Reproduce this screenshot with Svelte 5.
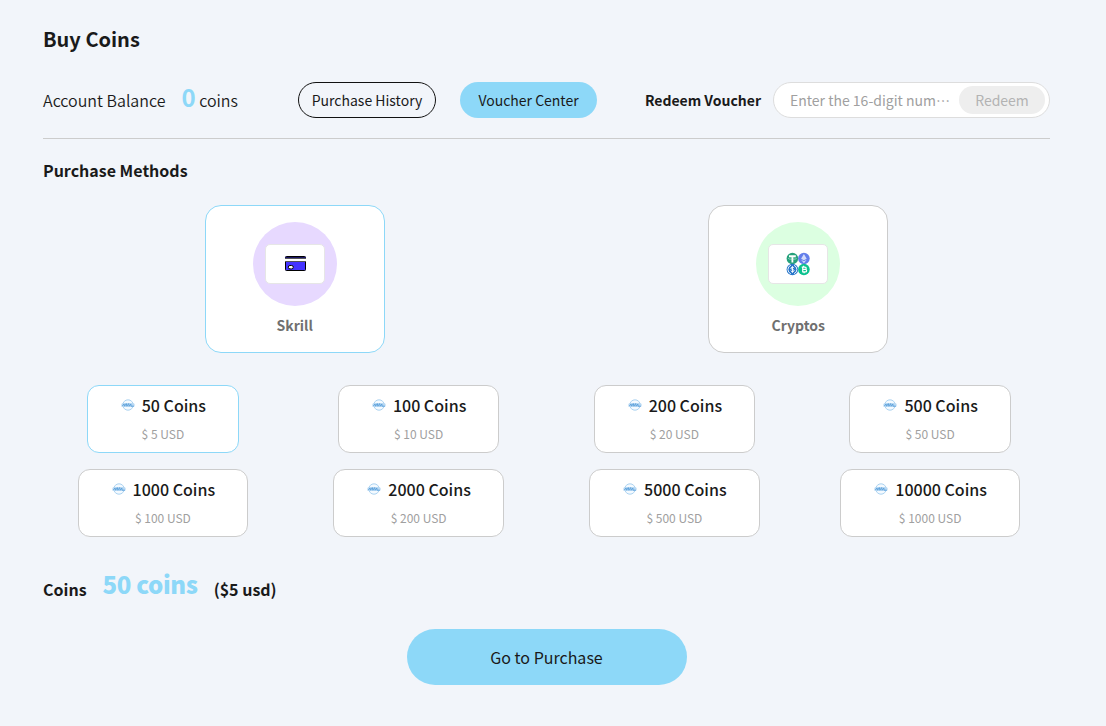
<script lang="ts">
  interface Pack {
    coins: number;
    usd: number;
  }

  const methods = [
    { id: "skrill", name: "Skrill", tint: "#e7d9ff" },
    { id: "cryptos", name: "Cryptos", tint: "#dcffe1" },
  ];

  const packs: Pack[] = [
    { coins: 50, usd: 5 },
    { coins: 100, usd: 10 },
    { coins: 200, usd: 20 },
    { coins: 500, usd: 50 },
    { coins: 1000, usd: 100 },
    { coins: 2000, usd: 200 },
    { coins: 5000, usd: 500 },
    { coins: 10000, usd: 1000 },
  ];

  let method = $state("skrill");
  let selected = $state(0);
  let voucher = $state("");

  const pack = $derived(packs[selected]);
</script>

<main>
  <h1>Buy Coins</h1>

  <div class="account">
    <div class="balance">
      <span>Account Balance</span>
      <span><b>0</b> coins</span>
    </div>
    <button class="pill history">Purchase History</button>
    <button class="pill center">Voucher Center</button>
    <label for="voucher">Redeem Voucher</label>
    <div class="redeem">
      <input id="voucher" placeholder="Enter the 16-digit number" maxlength="16" bind:value={voucher} />
      <button disabled={voucher.length < 16}>Redeem</button>
    </div>
  </div>

  <h2>Purchase Methods</h2>

  <div class="methods">
    {#each methods as m}
      <button class="method" class:active={method === m.id} onclick={() => (method = m.id)}>
        <span class="disc" style="background: {m.tint}">
          <span class="plate">
            {#if m.id === "skrill"}
              <svg width="22" height="16" viewBox="0 0 22 16">
                <rect x="1.5" y="0.5" width="20" height="14" rx="0.8" fill="#4433ff" stroke="#000" />
                <path d="M1 1.5h21" stroke="#1c1766" />
                <rect x="1" y="2" width="21" height="4" fill="#fff" />
                <path d="M1 2.5h21M1 5.5h21" stroke="#555" />
                <rect x="4.3" y="9.5" width="5" height="3.4" rx="1.7" fill="#fff" stroke="#000" />
              </svg>
            {:else}
              <svg width="24" height="24" viewBox="0 0 24 24">
                <circle cx="6.4" cy="6.5" r="5.8" fill="#26a17b" />
                <path d="M3 4.2h6.8M6.4 4v6.6" stroke="#fff" stroke-width="1.8" />
                <ellipse cx="6.4" cy="6.5" rx="4" ry="0.9" fill="none" stroke="#cfeee4" stroke-width="0.5" />
                <circle cx="17.9" cy="6.5" r="5.8" fill="#627eea" />
                <path d="M17.9 2.1l-2.8 4.6 2.8 1.6 2.8-1.6zM15.1 7.7l2.8 3.5 2.8-3.5-2.8 1.5z" fill="#d3dbfa" />
                <circle cx="6.4" cy="17.5" r="5.8" fill="#2775ca" />
                <path d="M4.8 13.3a4.5 4.5 0 0 0 0 8.4M8 13.3a4.5 4.5 0 0 1 0 8.4" fill="none" stroke="#fff" stroke-width="0.9" />
                <path d="M8 16.1c-.3-1.2-3.1-1.2-3.1.2 0 1.3 3.2.9 3.2 2.3 0 1.5-3 1.4-3.3.1M6.4 14.2v6.6" fill="none" stroke="#fff" stroke-width="1" />
                <circle cx="17.9" cy="17.5" r="5.8" fill="#0ac18e" />
                <path d="M15.7 15.2h3.2c1.8 0 1.8 2.2 0 2.2h-2.2 2.6c1.8 0 1.8 2.5 0 2.5h-3.1M16.7 15.1v4.8M17.6 13.7v1.4M18.1 19.9v1.4" fill="none" stroke="#fff" stroke-width="1.2" />
              </svg>
            {/if}
          </span>
        </span>
        <span class="name">{m.name}</span>
      </button>
    {/each}
  </div>

  <div class="packs">
    {#each packs as p, i}
      <button class="pack" class:active={selected === i} onclick={() => (selected = i)}>
        <span class="amount">
          <svg width="16" height="16" viewBox="0 0 16 16">
            <circle cx="8" cy="8" r="5.2" fill="#f4faff" stroke="#acd3f1" stroke-width="1" />
            <rect x="1.4" y="5.9" width="13.2" height="4.2" rx="1.6" fill="#b9d9f3" />
            <path d="M2.2 9.2l1.8-2.2.6 2.2 1.7-2.6.6 2.6 1.7-2.6.6 2.6 1.6-2.2.3 2.2h2.8" fill="none" stroke="#5a9fda" stroke-width="0.9" />
          </svg>
          {p.coins} Coins
        </span>
        <span class="price">$ {p.usd} USD</span>
      </button>
    {/each}
  </div>

  <div class="summary">
    <span>Coins</span>
    <strong>{pack.coins} coins</strong>
    <span>(${pack.usd} usd)</span>
  </div>

  <button class="buy">Go to Purchase</button>
</main>

<style>
  :global(body) {
    background: #f2f5fa;
  }
  main {
    box-sizing: border-box;
    height: 726px;
    padding: 23px 56px 0 43px;
    display: flex;
    flex-direction: column;
    color: #1a1a1a;
    font-family: "Noto Sans CJK JP", sans-serif;
  }
  button,
  input {
    box-sizing: border-box;
    margin: 0;
    padding: 0;
    border: 0;
    font: inherit;
    color: inherit;
  }
  button {
    cursor: pointer;
  }
  svg {
    display: block;
  }
  h1 {
    margin: 0;
    font-size: 20px;
    line-height: 32px;
    font-weight: 700;
  }
  .account {
    display: flex;
    align-items: center;
    height: 36px;
    margin-top: 27px;
    padding-bottom: 20px;
    border-bottom: 1px solid #ccc;
  }
  .balance {
    display: flex;
    align-items: baseline;
    gap: 16px;
    width: 255px;
    font-size: 16px;
    line-height: 36px;
    font-weight: 350;
  }
  .balance b {
    font-size: 24px;
    line-height: 30px;
    font-weight: 700;
    color: #8dd8f8;
  }
  .pill {
    height: 36px;
    border-radius: 18px;
    font-size: 14px;
  }
  .history {
    width: 138px;
    border: 1px solid #111;
    background: none;
  }
  .center {
    width: 137px;
    margin-left: 24px;
    background: #8dd8f8;
  }
  label {
    margin-left: auto;
    font-size: 14px;
    font-weight: 700;
  }
  .redeem {
    box-sizing: border-box;
    display: flex;
    align-items: center;
    width: 277px;
    height: 36px;
    margin-left: 12px;
    padding: 0 4px 0 16px;
    border: 1px solid #ddd;
    border-radius: 18px;
    background: #fff;
    font-size: 14px;
  }
  input {
    flex: 1;
    min-width: 0;
    margin-right: 8px;
    background: none;
    outline: none;
    text-overflow: ellipsis;
  }
  input::placeholder {
    color: #a0a0a0;
    opacity: 1;
  }
  .redeem button {
    width: 86px;
    height: 28px;
    border-radius: 14px;
    background: #eee;
    color: #b3b3b3;
  }
  h2 {
    margin: 18px 0 0;
    font-size: 16px;
    line-height: 26px;
    font-weight: 700;
  }
  .methods {
    display: grid;
    grid-template-columns: 1fr 1fr;
    justify-items: center;
    margin-top: 22px;
  }
  .method {
    display: flex;
    flex-direction: column;
    align-items: center;
    width: 180px;
    height: 148px;
    padding-top: 16px;
    border: 1px solid #ccc;
    border-radius: 16px;
    background: #fff;
  }
  .active {
    border-color: #8dd8f8;
  }
  .disc {
    display: grid;
    place-items: center;
    width: 84px;
    height: 84px;
    border-radius: 50%;
  }
  .plate {
    box-sizing: border-box;
    display: grid;
    place-items: center;
    width: 60px;
    height: 40px;
    border: 1px solid #e6e6e6;
    border-radius: 5px;
    background: #fff;
  }
  .name {
    margin-top: 8px;
    font-size: 14px;
    line-height: 22px;
    font-weight: 700;
    color: #707070;
  }
  .packs {
    display: grid;
    grid-template-columns: repeat(4, 1fr);
    gap: 16px;
    justify-items: center;
    margin-top: 32px;
  }
  .pack {
    display: flex;
    flex-direction: column;
    align-items: center;
    height: 68px;
    padding: 6px 32px 0;
    border: 1px solid #ccc;
    border-radius: 12px;
    background: #fff;
  }
  .pack.active {
    border-color: #8dd8f8;
  }
  .amount {
    display: flex;
    gap: 6px;
    font-size: 16px;
    line-height: 26px;
    font-weight: 500;
  }
  .amount svg {
    margin-top: 5px;
  }
  .price {
    margin-top: 7px;
    font-size: 12px;
    line-height: 18px;
    color: #a0a0a0;
  }
  .summary {
    display: flex;
    align-items: center;
    gap: 16px;
    height: 44px;
    margin-top: 28px;
    font-size: 16px;
    line-height: 40px;
    font-weight: 700;
  }
  .summary span {
    padding-top: 4px;
  }
  .summary strong {
    margin-bottom: 6px;
    font-size: 24px;
    letter-spacing: -0.35px;
    color: #8dd8f8;
  }
  .buy {
    align-self: center;
    width: 280px;
    height: 56px;
    margin-top: 20px;
    border-radius: 28px;
    background: #8dd8f8;
    font-size: 16px;
  }
</style>
